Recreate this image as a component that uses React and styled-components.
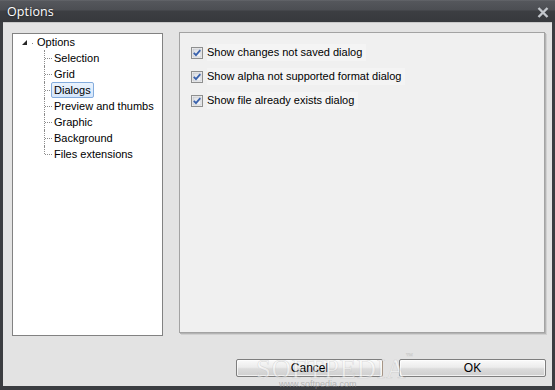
import styled, { createGlobalStyle } from 'styled-components';

const GlobalStyle = createGlobalStyle`
    html, body {
        margin: 0;
        padding: 0;
        background: #3b3d41;
    }
    body {
        font-family: "Liberation Sans", Arial, sans-serif;
        font-size: 11px;
    }
`

const treeItems = ['Selection', 'Grid', 'Dialogs', 'Preview and thumbs', 'Graphic', 'Background', 'Files extensions'];

const options = [
    { label: 'Show changes not saved dialog', width: 190 },
    { label: 'Show alpha not supported format dialog', width: 217 },
    { label: 'Show file already exists dialog', width: 249 },
];

const CheckIcon = () => (
    <svg width="12" height="12" viewBox="0 0 12 12">
        <defs>
            <linearGradient id="cbg" x1="0" y1="0" x2="1" y2="1">
                <stop offset="0" stopColor="#d8dbe0" />
                <stop offset="1" stopColor="#fbfbfb" />
            </linearGradient>
        </defs>
        <rect x="0.5" y="0.5" width="11" height="11" fill="#f4f4f4" stroke="#8e8f8f" />
        <rect x="2" y="2" width="8" height="8" fill="url(#cbg)" stroke="#b8bcc4" strokeWidth="0.6" />
        <path d="M2.8 5.8 L5 8.2 L9.3 3.2" fill="none" stroke="#3a62ad" strokeWidth="1.8" />
    </svg>
);

const App = () => {
    return (
        <>
            <GlobalStyle />
            <Window>
                <TitleBar>
                    <Title>Options</Title>
                    <CloseButton>
                        <svg width="12" height="11" viewBox="0 0 12 11">
                            <path d="M1.5 1 L10.5 10 M10.5 1 L1.5 10" stroke="#c3c7cc" strokeWidth="2.4" />
                        </svg>
                    </CloseButton>
                </TitleBar>
                <Frame>
                    <Main>
                        <Tree>
                            <RootRow>
                                <Expander>
                                    <svg width="5" height="5" viewBox="0 0 5 5">
                                        <polygon points="5,0 5,5 0,5" fill="#262626" />
                                    </svg>
                                </Expander>
                                <RootDot />
                                <NodeLabel>Options</NodeLabel>
                            </RootRow>
                            {treeItems.map((item, i) => (
                                <ChildRow key={item}>
                                    <Branch $last={i === treeItems.length - 1} />
                                    <NodeLabel $selected={item === 'Dialogs'}>{item}</NodeLabel>
                                </ChildRow>
                            ))}
                        </Tree>
                        <Panel>
                            {options.map((opt) => (
                                <OptionRow key={opt.label} $width={opt.width}>
                                    <CheckIcon />
                                    <OptionText>{opt.label}</OptionText>
                                </OptionRow>
                            ))}
                        </Panel>
                    </Main>
                    <Footer>
                        <Button>Cancel</Button>
                        <Button>OK</Button>
                    </Footer>
                    <Watermark>SOFTPEDIA<sup>™</sup></Watermark>
                    <WatermarkUrl>www.softpedia.com</WatermarkUrl>
                </Frame>
            </Window>
        </>
    );
};

const Window = styled.div`
    position: relative;
    width: 555px;
    height: 390px;
    display: flex;
    flex-direction: column;
    background: #3b3d41;
    overflow: hidden;
`

const TitleBar = styled.div`
    height: 22px;
    flex: none;
    display: flex;
    align-items: center;
    justify-content: space-between;
    padding: 0 6px 0 7px;
    box-sizing: border-box;
    background: linear-gradient(to bottom, #6a6c71 0px, #55575c 1px, #4c4e53 10px, #3c3e42 11px, #37393d 100%);
`

const Title = styled.span`
    color: #ffffff;
    font-family: "Open Sans", "Liberation Sans", sans-serif;
    font-size: 12.5px;
    letter-spacing: 0.1px;
    padding-top: 1px;
    text-shadow: 0 0 2px rgba(0, 0, 0, 0.6);
`

const CloseButton = styled.span`
    display: flex;
    align-items: center;
    padding-top: 2px;
`

const Frame = styled.div`
    position: relative;
    flex: 1;
    display: flex;
    flex-direction: column;
    margin: 0 3px 4px 3px;
    padding: 10px 6px 0 9px;
    background: #e3e3e3;
    border-top: 1px solid #c8c8c8;
`

const Main = styled.div`
    display: flex;
    align-items: flex-start;
    gap: 16px;
`

const Tree = styled.div`
    box-sizing: border-box;
    width: 151px;
    height: 303px;
    background: #ffffff;
    border: 1px solid #828282;
`

const RootRow = styled.div`
    height: 16px;
    display: flex;
    align-items: center;
    padding-left: 9px;
`

const Expander = styled.span`
    display: flex;
    width: 5px;
    height: 5px;
    margin-top: 1px;
`

const RootDot = styled.span`
    width: 1px;
    height: 1px;
    margin: 2px 1px 0 5px;
    background: #8a8a8a;
`

const ChildRow = styled.div`
    height: 16px;
    display: flex;
    align-items: center;
    padding-left: 31px;
`

const Branch = styled.span`
    position: relative;
    align-self: stretch;
    width: 7px;
    flex: none;

    &::before {
        content: '';
        position: absolute;
        left: 0;
        top: 0;
        height: ${(p) => (p.$last ? '8px' : '16px')};
        border-left: 1px dotted #8c8c8c;
    }

    &::after {
        content: '';
        position: absolute;
        left: 1px;
        top: 8px;
        width: 7px;
        border-top: 1px dotted #8c8c8c;
    }
`

const NodeLabel = styled.span`
    position: relative;
    height: 16px;
    line-height: 14px;
    box-sizing: border-box;
    padding: 0 2px;
    border: 1px solid ${(p) => (p.$selected ? '#84acdd' : 'transparent')};
    border-radius: 2px;
    background: ${(p) => (p.$selected ? 'linear-gradient(to bottom, #eaf3fd, #d5e6fb)' : 'transparent')};
    color: #000000;
    font-size: 11px;
    white-space: nowrap;
`

const Panel = styled.div`
    box-sizing: border-box;
    width: 366px;
    height: 301px;
    margin-top: -1px;
    padding: 7px 0 0 11px;
    background: #f0f0f0;
    border: 1px solid #a3a3a3;
    box-shadow: 1px 1px 0 #b4b4b4, 2px 2px 0 #d0d0d0;
    display: flex;
    flex-direction: column;
`

const OptionRow = styled.div`
    height: 24px;
    width: ${(p) => p.$width}px;
    display: flex;
    align-items: center;
    gap: 4px;

    svg {
        flex: none;
        margin-top: 1px;
    }
`

const OptionText = styled.span`
    color: #000000;
    font-size: 11px;
    line-height: 17px;
    padding-right: 4px;
    background: #f4f4f4;
    white-space: nowrap;
`

const Footer = styled.div`
    display: flex;
    justify-content: flex-end;
    gap: 16px;
    margin-top: 23px;
`

const Button = styled.button`
    width: 147px;
    height: 18px;
    padding: 0;
    box-sizing: border-box;
    border: 1px solid #7e7e7e;
    border-radius: 2px;
    background: linear-gradient(to bottom, #fafafa 0%, #ececec 45%, #dbdbdb 55%, #cfcfcf 100%);
    box-shadow: inset 0 0 0 1px rgba(255, 255, 255, 0.7);
    font-family: "Liberation Sans", Arial, sans-serif;
    font-size: 12px;
    color: #000000;
    line-height: 15px;
`

const Watermark = styled.div`
    position: absolute;
    left: 253px;
    top: 331px;
    font-family: "Liberation Serif", serif;
    font-size: 27px;
    letter-spacing: 0.5px;
    color: rgba(255, 255, 255, 0.5);
    -webkit-text-stroke: 0.6px rgba(150, 150, 150, 0.3);
    pointer-events: none;

    sup {
        font-size: 7px;
        vertical-align: top;
        position: relative;
        top: -2px;
    }
`

const WatermarkUrl = styled.div`
    position: absolute;
    left: 276px;
    top: 356px;
    font-family: "Liberation Sans Narrow", "Liberation Sans", sans-serif;
    font-size: 9px;
    line-height: 10px;
    color: rgba(150, 150, 150, 0.6);
    pointer-events: none;
`

export default App;
